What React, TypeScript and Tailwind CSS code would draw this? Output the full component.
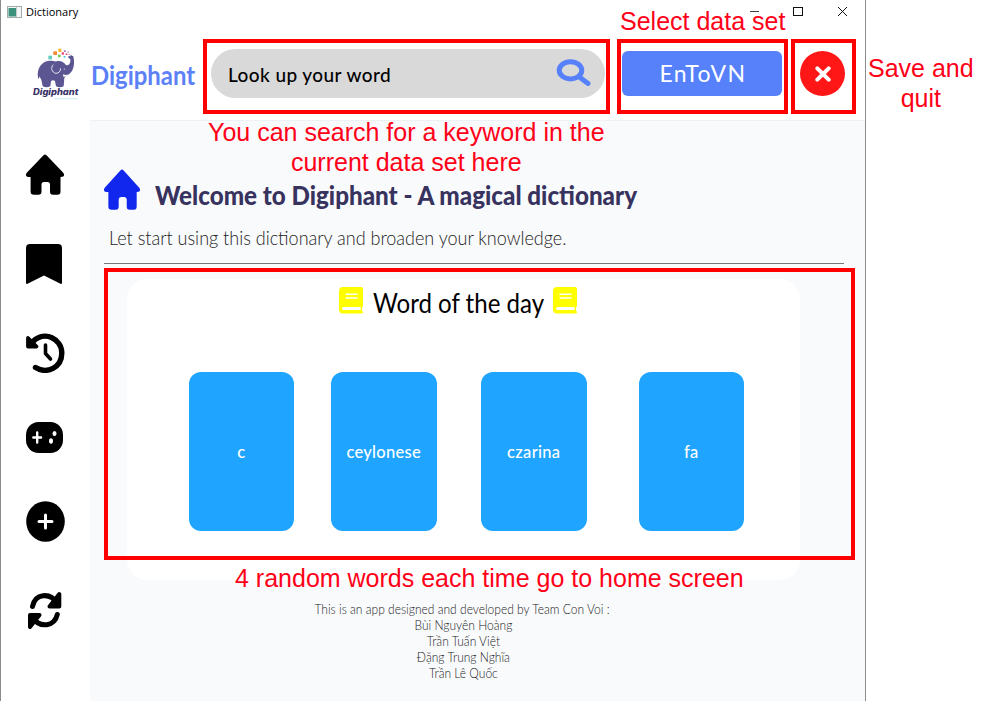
import type { ReactNode } from "react";

const words = [
  { text: "c", margin: "ml-0" },
  { text: "ceylonese", margin: "ml-[37px]" },
  { text: "czarina", margin: "ml-[44.5px]" },
  { text: "fa", margin: "ml-[52px]" },
];

const team = ["Bùi Nguyên Hoàng", "Trần Tuấn Việt", "Đặng Trung Nghĩa", "Trần Lê Quốc"];

function HouseIcon({ className }: { className: string }) {
  return (
    <svg className={className} viewBox="0 0 38 41" preserveAspectRatio="none" fill="currentColor">
      <path d="M17.5 1.2Q19 -.4 20.5 1.2L37 18.5Q39 20.8 37.2 22.6Q36.6 23 34.5 23V37.5Q34.5 40.8 31.5 40.8H27Q24 40.8 24 37.5V30.5Q24 28 21.5 28H18Q15.5 28 15.5 30.5V37.5Q15.5 40.8 12.5 40.8H8Q4.6 40.8 4.6 37.5V23Q1.5 23 .8 22.5Q-1 20.8 1 18.5Z" />
    </svg>
  );
}

function ElephantLogo() {
  return (
    <svg className="mt-[23px] h-[55px] w-[47px] shrink-0" viewBox="99 140 141 165">
      <path
        d="M114 232C110 208 121 187 143 182C155 179 162 184 170 183C183 180 192 186 198 194C207 197 212 189 211 177L203 170L213 165L220 168C225 191 221 212 208 221C200 226 196 229 193 233L191 258Q180 264 168 258L165 242Q158 237 153 243L151 258Q140 264 128 258L124 238L118 228L117 236Z"
        fill="#5b5592"
      />
      <path d="M160 193C151 201 155 217 168 219C177 219 182 211 182 204" fill="none" stroke="#fff" strokeWidth="2.5" />
      <path d="M189 222Q200 227 206 220Q201 230 190 229Z" fill="#fff" />
      <circle cx="193" cy="206" r="1.8" fill="#fff" />
      <rect x="145" y="166" width="11" height="11" fill="#63cdbb" />
      <rect x="160" y="153" width="11" height="11" fill="#f58a32" />
      <rect x="175" y="145" width="9" height="10" fill="#fbb62e" />
      <rect x="174" y="163" width="8" height="8" fill="#7ec855" />
      <rect x="185" y="156" width="7" height="7" fill="#e94a77" />
      <rect x="192" y="150" width="5" height="5" fill="#a669bd" />
      <rect x="191" y="167" width="5" height="5" fill="#43b6d6" />
      <rect x="197" y="159" width="5" height="5" fill="#e94a77" />
      <rect x="203" y="153" width="3" height="4" fill="#a669bd" />
      <rect x="206" y="161" width="3" height="3" fill="#e94a77" />
      <text x="99" y="285" textLength="136" lengthAdjust="spacingAndGlyphs" fill="#393267" fontFamily="Inter, sans-serif" fontSize="25" fontStyle="italic" fontWeight="800">
        Digiphant
      </text>
      <path d="M164 295H233" stroke="#d8eef5" strokeWidth="4" />
    </svg>
  );
}

function BookIcon() {
  return (
    <svg className="h-[27px] w-[24px] shrink-0" viewBox="0 0 24 27">
      <path d="M4 0H22Q24 0 24 2V18.5Q24 20 23 20.5V24Q24 24.3 24 25.2Q24 26.5 22.5 26.5H4Q0 26.5 0 22.5V4Q0 0 4 0Z" fill="#ff0" />
      <path d="M7 7.3H18M7 11H18" stroke="#fff" strokeWidth="1.4" strokeLinecap="round" />
      <path d="M4.5 21.5H20.5" stroke="#fff" strokeWidth="3" strokeLinecap="round" />
    </svg>
  );
}

function TitleBar() {
  return (
    <div className="flex h-6 items-center pl-[6px]">
      <svg className="h-[12px] w-[15px] shrink-0" viewBox="0 0 15 12">
        <rect x=".5" y=".5" width="14" height="11" fill="#f5f7f7" stroke="#a4abad" />
        <rect x="1.5" y="2" width="8" height="8.5" fill="#3c917c" />
        <path d="M9.5 1V11" stroke="#c5cccd" />
      </svg>
      <span className="ml-[4px] w-[53px] origin-left font-['Open_Sans',sans-serif] text-[11px] text-black">Dictionary</span>
      <svg className="ml-[671px] h-[12px] w-[98px] shrink-0" viewBox="0 0 98 12" fill="none" stroke="#111">
        <path d="M0 5.5H9" strokeWidth=".8" />
        <rect x="43.5" y="1.5" width="9" height="8" />
        <path d="M88 1L97 10M97 1L88 10" />
      </svg>
    </div>
  );
}

function Header() {
  return (
    <header className="flex h-24 items-start pl-[32px]">
      <ElephantLogo />
      <span className="ml-[11px] mt-[33px] w-[120px] origin-left whitespace-nowrap font-[Lato,sans-serif] text-[27px] leading-[36px] font-bold text-[#5b80f7] scale-x-[0.885]">
        Digiphant
      </span>
      <div className="mt-[25px] flex h-[49px] w-[394px] shrink-0 items-center justify-between rounded-full bg-[#d9d9d9] pl-[17px] pr-[14px]">
        <span className="mt-[3px] whitespace-nowrap font-[Lato,sans-serif] text-[19px] tracking-[0.42px] font-medium text-black">Look up your word</span>
        <svg className="mb-[2px] h-[27px] w-[35px] shrink-0" viewBox="0 0 35 27" fill="none" stroke="#5681fa">
          <ellipse cx="14.5" cy="11.3" rx="11.3" ry="8.6" strokeWidth="5" />
          <path d="M24 18.5L32 24.5" strokeWidth="5" strokeLinecap="round" />
        </svg>
      </div>
      <button className="ml-[17px] mt-[27px] flex h-[45px] w-[160px] shrink-0 items-center justify-center rounded-[6px] bg-[#5681fa] pl-[2px] font-[Lato,sans-serif] text-[23px] tracking-[1.5px] text-white">
        EnToVN
      </button>
      <button className="ml-[18px] mt-[27px] flex h-[45px] w-[45px] shrink-0 items-center justify-center rounded-full bg-[#ff1616]">
        <svg className="h-[16px] w-[16px]" viewBox="0 0 16 16" stroke="#fff" strokeWidth="4" strokeLinecap="round">
          <path d="M2.3 2.3L13.7 13.7M13.7 2.3L2.3 13.7" />
        </svg>
      </button>
    </header>
  );
}

function Sidebar() {
  return (
    <nav className="flex w-[89px] shrink-0 flex-col items-start pl-[25px] pt-[34px] text-black">
      <HouseIcon className="h-[41px] w-[38px]" />
      <svg className="mt-[49px] h-[40px] w-[36px]" viewBox="0 0 36 40">
        <path d="M4 0H32Q36 0 36 4V38.5Q36 40.5 34.5 39.7L18 31.5L1.5 39.7Q0 40.5 0 38.5V4Q0 0 4 0Z" />
      </svg>
      <svg className="mt-[49px] h-[40px] w-[39px]" viewBox="0 0 39 40" fill="none" stroke="currentColor" strokeLinecap="round" strokeLinejoin="round">
        <path d="M7 8.5C19-3 35.8 6 35.8 20C35.8 34.5 21 41.5 9.5 34.5" strokeWidth="5.4" />
        <path d="M2 5L10.5 13.5H2Z" fill="currentColor" strokeWidth="3.8" />
        <path d="M19.5 12V20.5L24.5 26" strokeWidth="3.6" />
      </svg>
      <svg className="mt-[49px] h-[31px] w-[37px]" viewBox="0 0 37 31">
        <rect width="37" height="31" rx="12.5" ry="13" />
        <path d="M11.2 10.5V20.5M7.3 15.5H15.1" stroke="#fff" strokeWidth="2.4" strokeLinecap="round" />
        <ellipse cx="28.5" cy="11.5" rx="2" ry="2.6" fill="#fff" />
        <ellipse cx="25" cy="19" rx="2" ry="2.8" fill="#fff" />
      </svg>
      <svg className="mt-[48px] h-[41px] w-[39px]" viewBox="0 0 39 41">
        <ellipse cx="19.5" cy="20.5" rx="19.3" ry="20.2" />
        <path d="M19.5 14V27M13 20.5H26" stroke="#fff" strokeWidth="3" strokeLinecap="round" />
      </svg>
      <svg className="mt-[49px] ml-[1px] h-[39px] w-[36px]" viewBox="0 0 36 39" fill="none" stroke="currentColor" strokeWidth="5" strokeLinecap="round" strokeLinejoin="round">
        <path d="M5.5 15.5C8 2.5 23 1 30 12" />
        <path d="M32.3 3V15.5H22.5Z" fill="currentColor" strokeWidth="4" />
        <path d="M30.3 23.5C27.5 35.5 13 37.5 6 27" />
        <path d="M3 36V24H12.5Z" fill="currentColor" strokeWidth="4" />
      </svg>
    </nav>
  );
}

function WordCard({ text, margin }: { text: string; margin: string }) {
  return (
    <div className={`${margin} flex h-[159px] w-[105.5px] shrink-0 items-center justify-center rounded-[12px] bg-[#1fa5ff] pt-[2px] font-[Lato,sans-serif] text-[16.5px] tracking-[0.3px] font-medium text-white`}>
      {text}
    </div>
  );
}

function Home() {
  return (
    <main className="flex min-w-0 flex-1 flex-col border-t border-[#edf1f3] bg-[#f9fafc]">
      <div className="flex h-[89px] items-end pl-[14px]">
        <HouseIcon className="h-[41px] w-[36px] shrink-0 text-[#1227ee]" />
        <h1 className="ml-[15px] mb-[-3px] origin-left whitespace-nowrap font-[Lato,sans-serif] text-[27px] leading-[36px] font-black text-[#38325f] scale-x-[0.896]">
          Welcome to Digiphant - A magical dictionary
        </h1>
      </div>
      <p className="ml-[19px] mt-[13px] origin-left whitespace-nowrap font-[Lato,sans-serif] text-[20px] leading-[28px] font-light text-[#222] scale-x-[0.9]">
        Let start using this dictionary and broaden your knowledge.
      </p>
      <hr className="ml-[14px] mt-[12px] w-[740px] border-t border-[#77777b]" />
      <section className="ml-[37px] mt-[15px] h-[301px] w-[673px] shrink-0 rounded-[20px] bg-white">
        <div className="flex h-[35px] items-end pl-[212px]">
          <BookIcon />
          <h2 className="ml-[10px] mb-[-6px] w-[180px] origin-left whitespace-nowrap font-[Lato,sans-serif] text-[26px] leading-[34px] text-black scale-x-[0.925]">
            Word of the day
          </h2>
          <BookIcon />
        </div>
        <div className="mt-[57.5px] flex pl-[61.5px]">
          {words.map((word) => (
            <WordCard key={word.text} text={word.text} margin={word.margin} />
          ))}
        </div>
      </section>
      <footer className="mt-[21px] w-[744px] origin-center text-center font-[Lato,sans-serif] text-[13px] leading-[16px] font-light text-[#222] scale-x-[0.925]">
        <p>This is an app designed and developed by Team Con Voi :</p>
        {team.map((name) => (
          <p key={name} className="pl-[3px]">{name}</p>
        ))}
      </footer>
    </main>
  );
}

function Note({ className, children }: { className: string; children: ReactNode }) {
  return (
    <div className={`${className} absolute whitespace-nowrap text-center font-['Liberation_Sans',sans-serif] text-[25px] leading-[30px] text-[#ff0018]`}>
      {children}
    </div>
  );
}

function Frame({ className }: { className: string }) {
  return <div className={`${className} absolute border-[4px] border-[#ff0000]`} />;
}

export default function App() {
  return (
    <div className="relative h-[701px] w-[1004px] overflow-hidden bg-white">
      <div className="flex h-full w-[866px] flex-col border-x border-[#8c8c8c] bg-white">
        <TitleBar />
        <Header />
        <div className="flex min-h-0 flex-1">
          <Sidebar />
          <Home />
        </div>
      </div>
      <Frame className="left-[203px] top-[39px] h-[75px] w-[407px]" />
      <Frame className="left-[617px] top-[39px] h-[75px] w-[171px]" />
      <Frame className="left-[791px] top-[39px] h-[75px] w-[65px]" />
      <Frame className="left-[104px] top-[268px] h-[292px] w-[751px]" />
      <Note className="left-[620px] top-[6px]">Select data set</Note>
      <Note className="left-[868px] top-[53px]">
        Save and
        <br />
        quit
      </Note>
      <Note className="left-[208px] top-[117px]">
        You can search for a keyword in the
        <br />
        current data set here
      </Note>
      <Note className="left-[235px] top-[563px]">4 random words each time go to home screen</Note>
    </div>
  );
}
